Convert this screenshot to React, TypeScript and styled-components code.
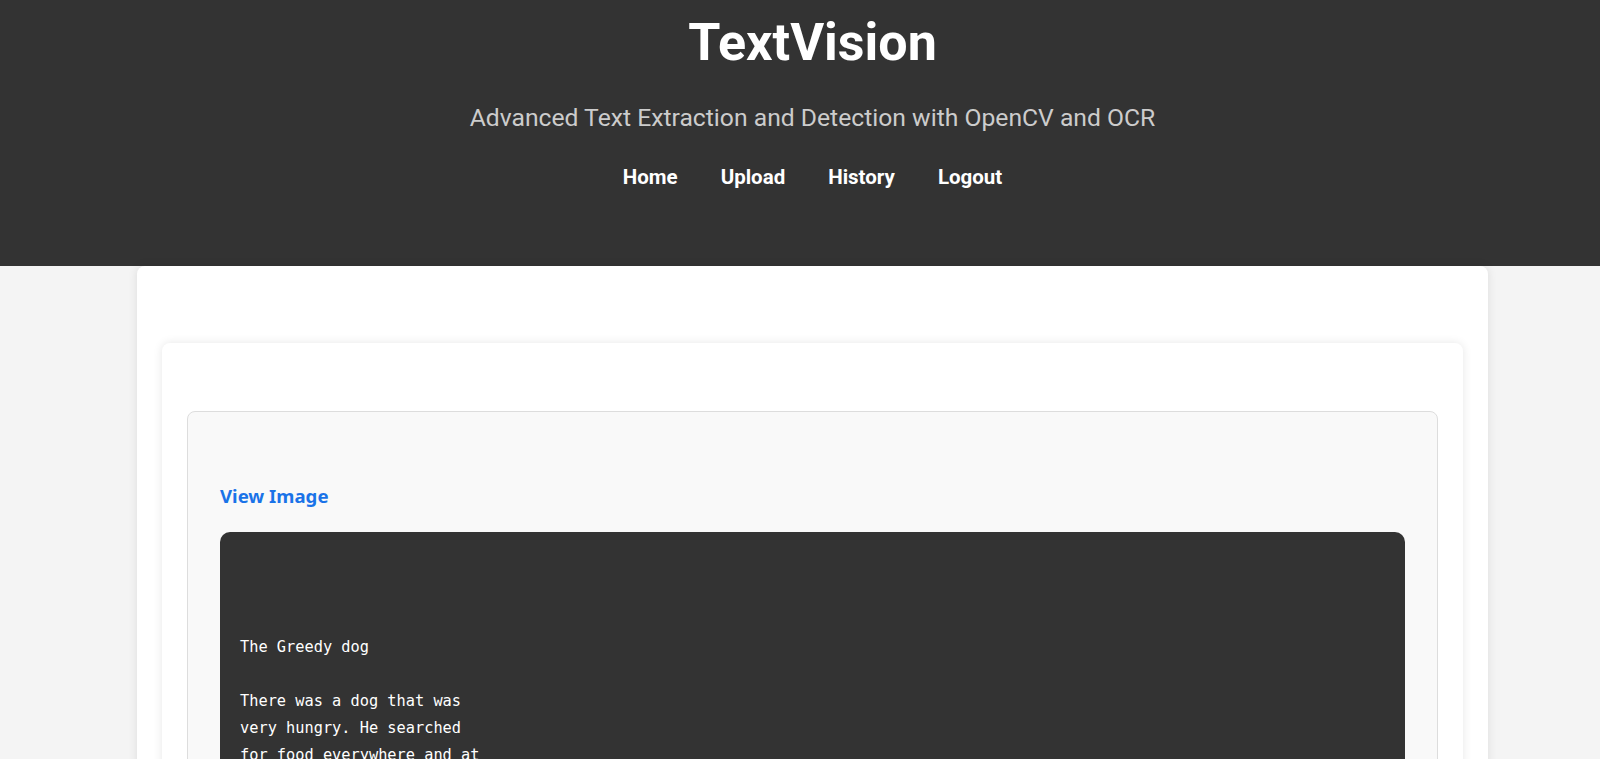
import React from "react";
import styled, { createGlobalStyle } from "styled-components";

const GlobalStyle = createGlobalStyle`
  html, body {
    margin: 0;
    padding: 0;
    background: #f4f4f4;
    font-family: Roboto, "Liberation Sans", Arial, sans-serif;
  }
  * { box-sizing: border-box; }
`;

const Header = styled.header`
  background: #333333;
  color: #ffffff;
  height: 266px;
  padding-left: 25px;
  display: flex;
  flex-direction: column;
  align-items: center;
`;

const Title = styled.h1`
  margin: 12px 0 0;
  font-size: 52px;
  font-weight: 700;
  line-height: normal;
`;

const Subtitle = styled.p`
  margin: 30px 0 0;
  font-size: 24.7px;
  font-weight: 400;
  color: #cccccc;
  line-height: normal;
`;

const Nav = styled.nav`
  margin-top: 33px;
  display: flex;
  gap: 43px;
`;

const NavLink = styled.a`
  color: #ffffff;
  text-decoration: none;
  font-weight: 700;
  font-size: 20.5px;
  line-height: normal;
`;

const Main = styled.main`
  padding-left: 25px;
  display: flex;
  justify-content: center;
`;

const Container = styled.div`
  width: 1351px;
  background: #ffffff;
  border-radius: 8px 8px 0 0;
  box-shadow: 0 0 10px rgba(0, 0, 0, 0.1);
  padding: 77px 25px 40px;
`;

const Card = styled.section`
  background: #ffffff;
  border-radius: 8px;
  box-shadow: 0 0 10px rgba(0, 0, 0, 0.1);
  padding: 68px 25px 25px;
`;

const ResultItem = styled.div`
  background: #f9f9f9;
  border: 1px solid #dddddd;
  border-radius: 8px;
  padding: 70px 32px 32px;
`;

const ViewLink = styled.a`
  display: block;
  color: #1a73e8;
  text-decoration: none;
  font-family: "Noto Sans", "Open Sans", sans-serif;
  font-weight: 700;
  font-size: 18.6px;
  line-height: 27px;
  margin-bottom: 23px;
`;

const TextBox = styled.pre`
  margin: 0;
  background: #333333;
  color: #ffffff;
  border-radius: 10px;
  padding: 21px 20px;
  font-family: "DejaVu Sans Mono", "Liberation Mono", monospace;
  font-size: 15.3px;
  line-height: 27px;
  white-space: pre-wrap;
`;

const extracted = `


The Greedy dog

There was a dog that was
very hungry. He searched
for food everywhere and at
last he found a bone. He
held the bone in his mouth
and started walking home.
On the way he had to cross
a bridge over a river. When
he looked into the water he
saw his own reflection.
`;

export default function App() {
  return (
    <>
      <GlobalStyle />
      <Header>
        <Title>TextVision</Title>
        <Subtitle>Advanced Text Extraction and Detection with OpenCV and OCR</Subtitle>
        <Nav>
          <NavLink href="#">Home</NavLink>
          <NavLink href="#">Upload</NavLink>
          <NavLink href="#">History</NavLink>
          <NavLink href="#">Logout</NavLink>
        </Nav>
      </Header>
      <Main>
        <Container>
          <Card>
            <ResultItem>
              <ViewLink href="#">View Image</ViewLink>
              <TextBox>{extracted}</TextBox>
            </ResultItem>
          </Card>
        </Container>
      </Main>
    </>
  );
}
